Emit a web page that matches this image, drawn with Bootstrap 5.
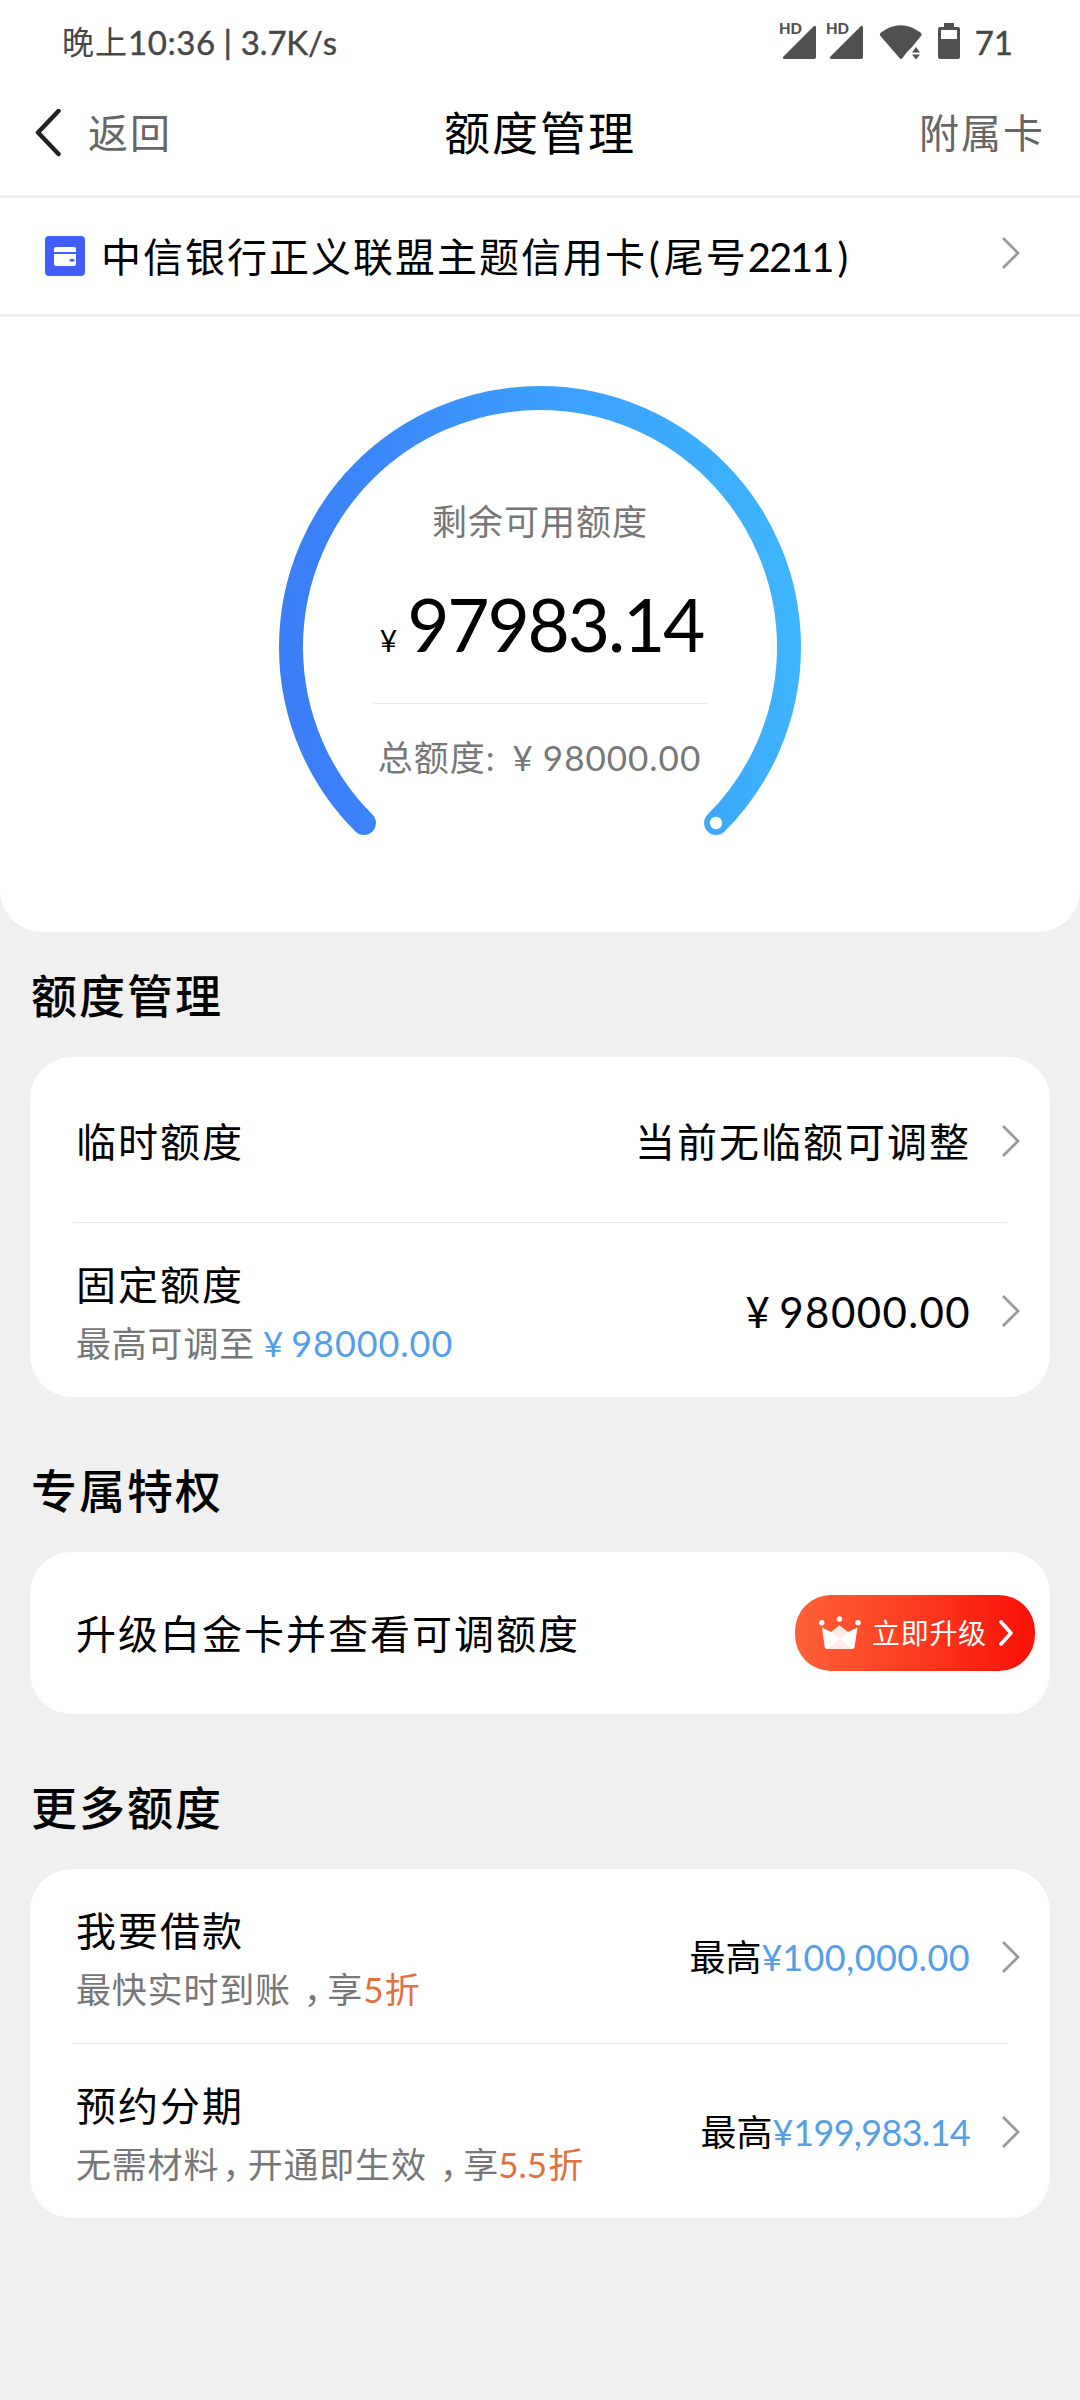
<!DOCTYPE html>
<html lang="zh-CN">
<head>
<meta charset="utf-8">
<meta name="viewport" content="width=device-width, initial-scale=1">
<title>额度管理</title>
<link href="https://cdn.jsdelivr.net/npm/bootstrap@5.3.0/dist/css/bootstrap.min.css" rel="stylesheet">
<style>
body{font-family:Lato,"Noto Sans CJK SC",sans-serif;background:#f0f0f0;color:#000;min-height:2400px;font-kerning:none}
span,h1,h2{white-space:nowrap}
svg{display:block;flex:none}
.status-bar{height:72px;padding:12px 67px 0 62px;font-size:32px;line-height:40px;color:#464646}
.clock{font-size:33px;letter-spacing:.6px;-webkit-text-stroke:.4px}
.hd-label{font:900 15px Lato,sans-serif}
.title-bar{height:123px;padding:0 35px 2px 35px;color:#666;font-size:40px;line-height:50px}
.title-bar h1{font-size:46px;line-height:50px;letter-spacing:2px;color:#000;font-weight:400}
.side{flex:1 1 0}
.zh{letter-spacing:2px}
.pick-row{height:122px;border-top:3px solid #eee;border-bottom:3px solid #eee;padding:0 60px 0 45px;font-size:40px;line-height:50px}
.pick-row .chev{margin-bottom:7px}
.hero{height:615px;padding-top:69px;border-radius:0 0 42px 42px}
.gauge{width:522px;height:460px}
.gauge-text{inset:0}
.cap{font-size:35px;line-height:50px;color:#777;letter-spacing:1px;margin-top:110px}
.sum{line-height:80px;margin-top:38px;padding-left:3px}
.sum-yen{font-size:30px;margin-right:10px}
.sum-num{font-size:73px;letter-spacing:-2.2px}
.rule{height:1px;background:#e8e8e8}
.sum-rule{width:333px;margin-top:23px}
.total{margin-top:28px;padding-right:1px}
.total-yen{margin:0 9px 0 17px}
.section-title{height:155px;padding:33px 31px 0;font-size:46px;line-height:50px;font-weight:500;letter-spacing:2px}
.section-title.first{height:125px;padding-top:3px}
.panel{margin:0 30px;border-radius:42px;background:#fff}
.item{height:174px;padding:0 30px 0 46px;font-size:40px;line-height:58px}
.item.tall{height:165px}
.item.promo{height:162px;padding-right:15px}
.item .chev{margin:2px 0 0 31px}
.item-sub{font-size:35px;color:#777}
.sub-zh{letter-spacing:.8px}
.sub-num{font-size:36px;letter-spacing:.9px}
.big-num{font-size:42px;letter-spacing:1.4px}
.amount{font-size:36px;padding:2px 1px 0 0}
.blue{color:#559fe8}.orange{color:#e2703c}
.inset{margin:0 43px}
.comma{font-feature-settings:"halt";padding-left:13px;margin-right:6px}
.comma.near{padding-left:3px;margin-right:8px}
.upgrade{width:240px;height:76px;border-radius:36px;background:linear-gradient(90deg,#ff6038,#fc4021 45%,#f9140a 95%);font-size:28px;letter-spacing:.7px;color:#fff;line-height:40px;padding:0 22px 0 24px}
</style>
</head>
<body>
<div class="status-bar bg-white d-flex align-items-center justify-content-between">
  <div class="d-flex"><span style="letter-spacing:1px">晚上</span><span class="clock">10:36</span><span style="margin:0 9px 0 8px;-webkit-text-stroke:.6px">|</span><span class="clock" style="letter-spacing:-.2px">3.7K/s</span></div>
  <div class="d-flex align-items-center">
    <svg width="190" height="40" viewBox="776 22 190 40" fill="#505050">
      <text class="hd-label" x="779" y="34" textLength="23" lengthAdjust="spacingAndGlyphs">HD</text><text class="hd-label" x="826" y="34" textLength="23" lengthAdjust="spacingAndGlyphs">HD</text>
      <path id="sig" d="M813.500 26.500q2.500-2 2.500 1V57q0 2-2 2H785q-3.500 0-1.500-2.500z"/><use href="#sig" x="47"/>
      <path d="M881 32.500Q900.500 18 920.500 32.500q2 1.500 .5 3.500L912 47l-5 5-4.500 6q-1.500 2-3 0L880.500 36q-1.500-2 .5-3.500z"/>
      <path d="M912 52.500l4-5.500 4 5.500zM912 54.500l4 5 4-5z"/>
      <path fill-rule="evenodd" d="M944 23h10v4h4q2 0 2 2v28q0 2-2 2h-18q-2 0-2-2V29q0-2 2-2h4zM941 30v9h16v-9z"/>
    </svg>
    <span class="clock" style="margin-left:9px;letter-spacing:0">71</span>
  </div>
</div>
<header class="title-bar d-flex align-items-center bg-white">
  <div class="side d-flex align-items-center">
    <svg width="26" height="48" viewBox="0 0 26 48" fill="none" stroke="#222" stroke-width="4.500" stroke-linecap="round" stroke-linejoin="round"><path d="M23.500 2L3 23.500 23.500 45"/></svg>
    <span class="zh" style="margin-left:27px">返回</span>
  </div>
  <h1 class="m-0">额度管理</h1>
  <div class="side text-end"><span class="zh">附属卡</span></div>
</header>
<div class="pick-row bg-white d-flex align-items-center">
  <svg width="40" height="40" viewBox="0 0 40 40"><rect width="40" height="40" rx="4" fill="#415dfa"/><path fill="#fff" d="M11 11h18q2 0 2 2v3H9v-3q0-2 2-2zM9 18h22v10q0 2-2 2H11q-2 0-2-2z"/><rect x="24.500" y="23" width="5" height="2.500" rx="1.200" fill="#415dfa"/></svg>
  <div class="d-flex" style="margin-left:16px;padding-top:2px"><span class="zh">中信银行正义联盟主题信用卡</span><span style="margin:0 4px 0 2px">(</span><span class="zh">尾号</span><span style="letter-spacing:-2px">2211</span><span style="margin-left:5px">)</span></div>
  <svg class="chev ms-auto" width="18" height="32" viewBox="0 0 18 32" fill="none" stroke="#999" stroke-width="2.800"><path id="go" d="M1 1l15 15L1 31"/></svg>
</div>
<main>
<section class="hero bg-white">
  <div class="gauge position-relative mx-auto">
    <svg width="522" height="460" viewBox="0 0 522 460" fill="none">
      <defs><linearGradient id="arc" gradientUnits="userSpaceOnUse" x1="0" y1="300" x2="522" y2="230"><stop stop-color="#3b7df6"/><stop offset=".25" stop-color="#3b88fa"/><stop offset=".6" stop-color="#3ba0fb"/><stop offset="1" stop-color="#3fb4fe"/></linearGradient></defs>
      <path d="M84.900 437.100A249 249 0 1 1 437.100 437.100" stroke="url(#arc)" stroke-width="24" stroke-linecap="round"/>
      <circle cx="437" cy="437" r="6.200" fill="#fff"/>
    </svg>
    <div class="gauge-text position-absolute d-flex flex-column align-items-center">
      <span class="cap">剩余可用额度</span>
      <div class="sum d-flex align-items-baseline"><span class="sum-yen">¥</span><span class="sum-num">97983.14</span></div>
      <div class="rule sum-rule"></div>
      <div class="cap total d-flex"><span>总额度:</span><span class="total-yen">¥</span><span>98000.00</span></div>
    </div>
  </div>
</section>
<h2 class="section-title first m-0 d-flex align-items-center"><span>额度管理</span></h2>
<section class="panel">
  <div class="item tall d-flex align-items-center">
    <span class="zh pt-1">临时额度</span><span class="zh ms-auto pt-1">当前无临额可调整</span>
    <svg class="chev" width="18" height="32" viewBox="0 0 18 32" fill="none" stroke="#999" stroke-width="2.800"><use href="#go"/></svg>
  </div>
  <div class="inset rule"></div>
  <div class="item d-flex align-items-center">
    <div class="pt-2"><div><span class="zh">固定额度</span></div><div class="item-sub d-flex"><span class="sub-zh">最高可调至</span><span class="blue ms-2">¥</span><span class="sub-num blue ms-2">98000.00</span></div></div>
    <div class="big-num ms-auto d-flex pt-1"><span>¥</span><span class="ms-2">98000.00</span></div>
    <svg class="chev" width="18" height="32" viewBox="0 0 18 32" fill="none" stroke="#999" stroke-width="2.800"><use href="#go"/></svg>
  </div>
</section>
<h2 class="section-title m-0 d-flex align-items-center"><span>专属特权</span></h2>
<section class="panel">
  <div class="item promo d-flex align-items-center">
    <span class="zh" style="padding-top:2px">升级白金卡并查看可调额度</span>
    <button class="upgrade ms-auto border-0 d-flex align-items-center">
      <svg width="42" height="34" viewBox="0 0 42 34" fill="#fff"><circle cx="2.800" cy="6.800" r="2.700"/><circle cx="20.500" cy="3" r="2.700"/><circle cx="39" cy="6.800" r="2.700"/><path d="M3 11.500l9 4.500L20.500 9.500 29 16 38.500 11.500l-3 19.500q-.3 2-2.300 2H8q-2 0-2.300-2z"/><path fill="#ffe3df" d="M20.500 9.500L29 16 21 23l-8-7z" opacity=".8"/><path fill="#ffe3df" d="M21 23L34 33H8z" opacity=".7"/></svg>
      <span style="margin-left:11px">立即升级</span>
      <svg class="ms-auto" width="14" height="26" viewBox="0 0 14 26" fill="none" stroke="#fff" stroke-width="3.600" stroke-linecap="round" stroke-linejoin="round"><path d="M2 2l10 11L2 24"/></svg>
    </button>
  </div>
</section>
<h2 class="section-title m-0 d-flex align-items-center"><span>更多额度</span></h2>
<section class="panel">
  <div class="item d-flex align-items-center">
    <div class="pt-2"><div><span class="zh">我要借款</span></div><div class="item-sub d-flex"><span class="sub-zh">最快实时到账</span><span class="comma">，</span><span>享</span><span class="orange" style="margin:0 1px">5</span><span class="orange">折</span></div></div>
    <div class="amount ms-auto d-flex"><span>最高</span><span class="blue">¥</span><span class="blue" style="letter-spacing:.4px">100,000.00</span></div>
    <svg class="chev" width="18" height="32" viewBox="0 0 18 32" fill="none" stroke="#999" stroke-width="2.800"><use href="#go"/></svg>
  </div>
  <div class="inset rule"></div>
  <div class="item d-flex align-items-center">
    <div class="pt-2"><div><span class="zh">预约分期</span></div><div class="item-sub d-flex"><span class="sub-zh">无需材料</span><span class="comma near">，</span><span class="sub-zh">开通即生效</span><span class="comma">，</span><span>享</span><span class="orange">5.5</span><span class="orange" style="padding-left:1px">折</span></div></div>
    <div class="amount ms-auto d-flex"><span>最高</span><span class="blue">¥</span><span class="blue" style="letter-spacing:-.7px">199,983.14</span></div>
    <svg class="chev" width="18" height="32" viewBox="0 0 18 32" fill="none" stroke="#999" stroke-width="2.800"><use href="#go"/></svg>
  </div>
</section>
</main>
<script src="https://cdn.jsdelivr.net/npm/bootstrap@5.3.0/dist/js/bootstrap.bundle.min.js"></script>
</body>
</html>
